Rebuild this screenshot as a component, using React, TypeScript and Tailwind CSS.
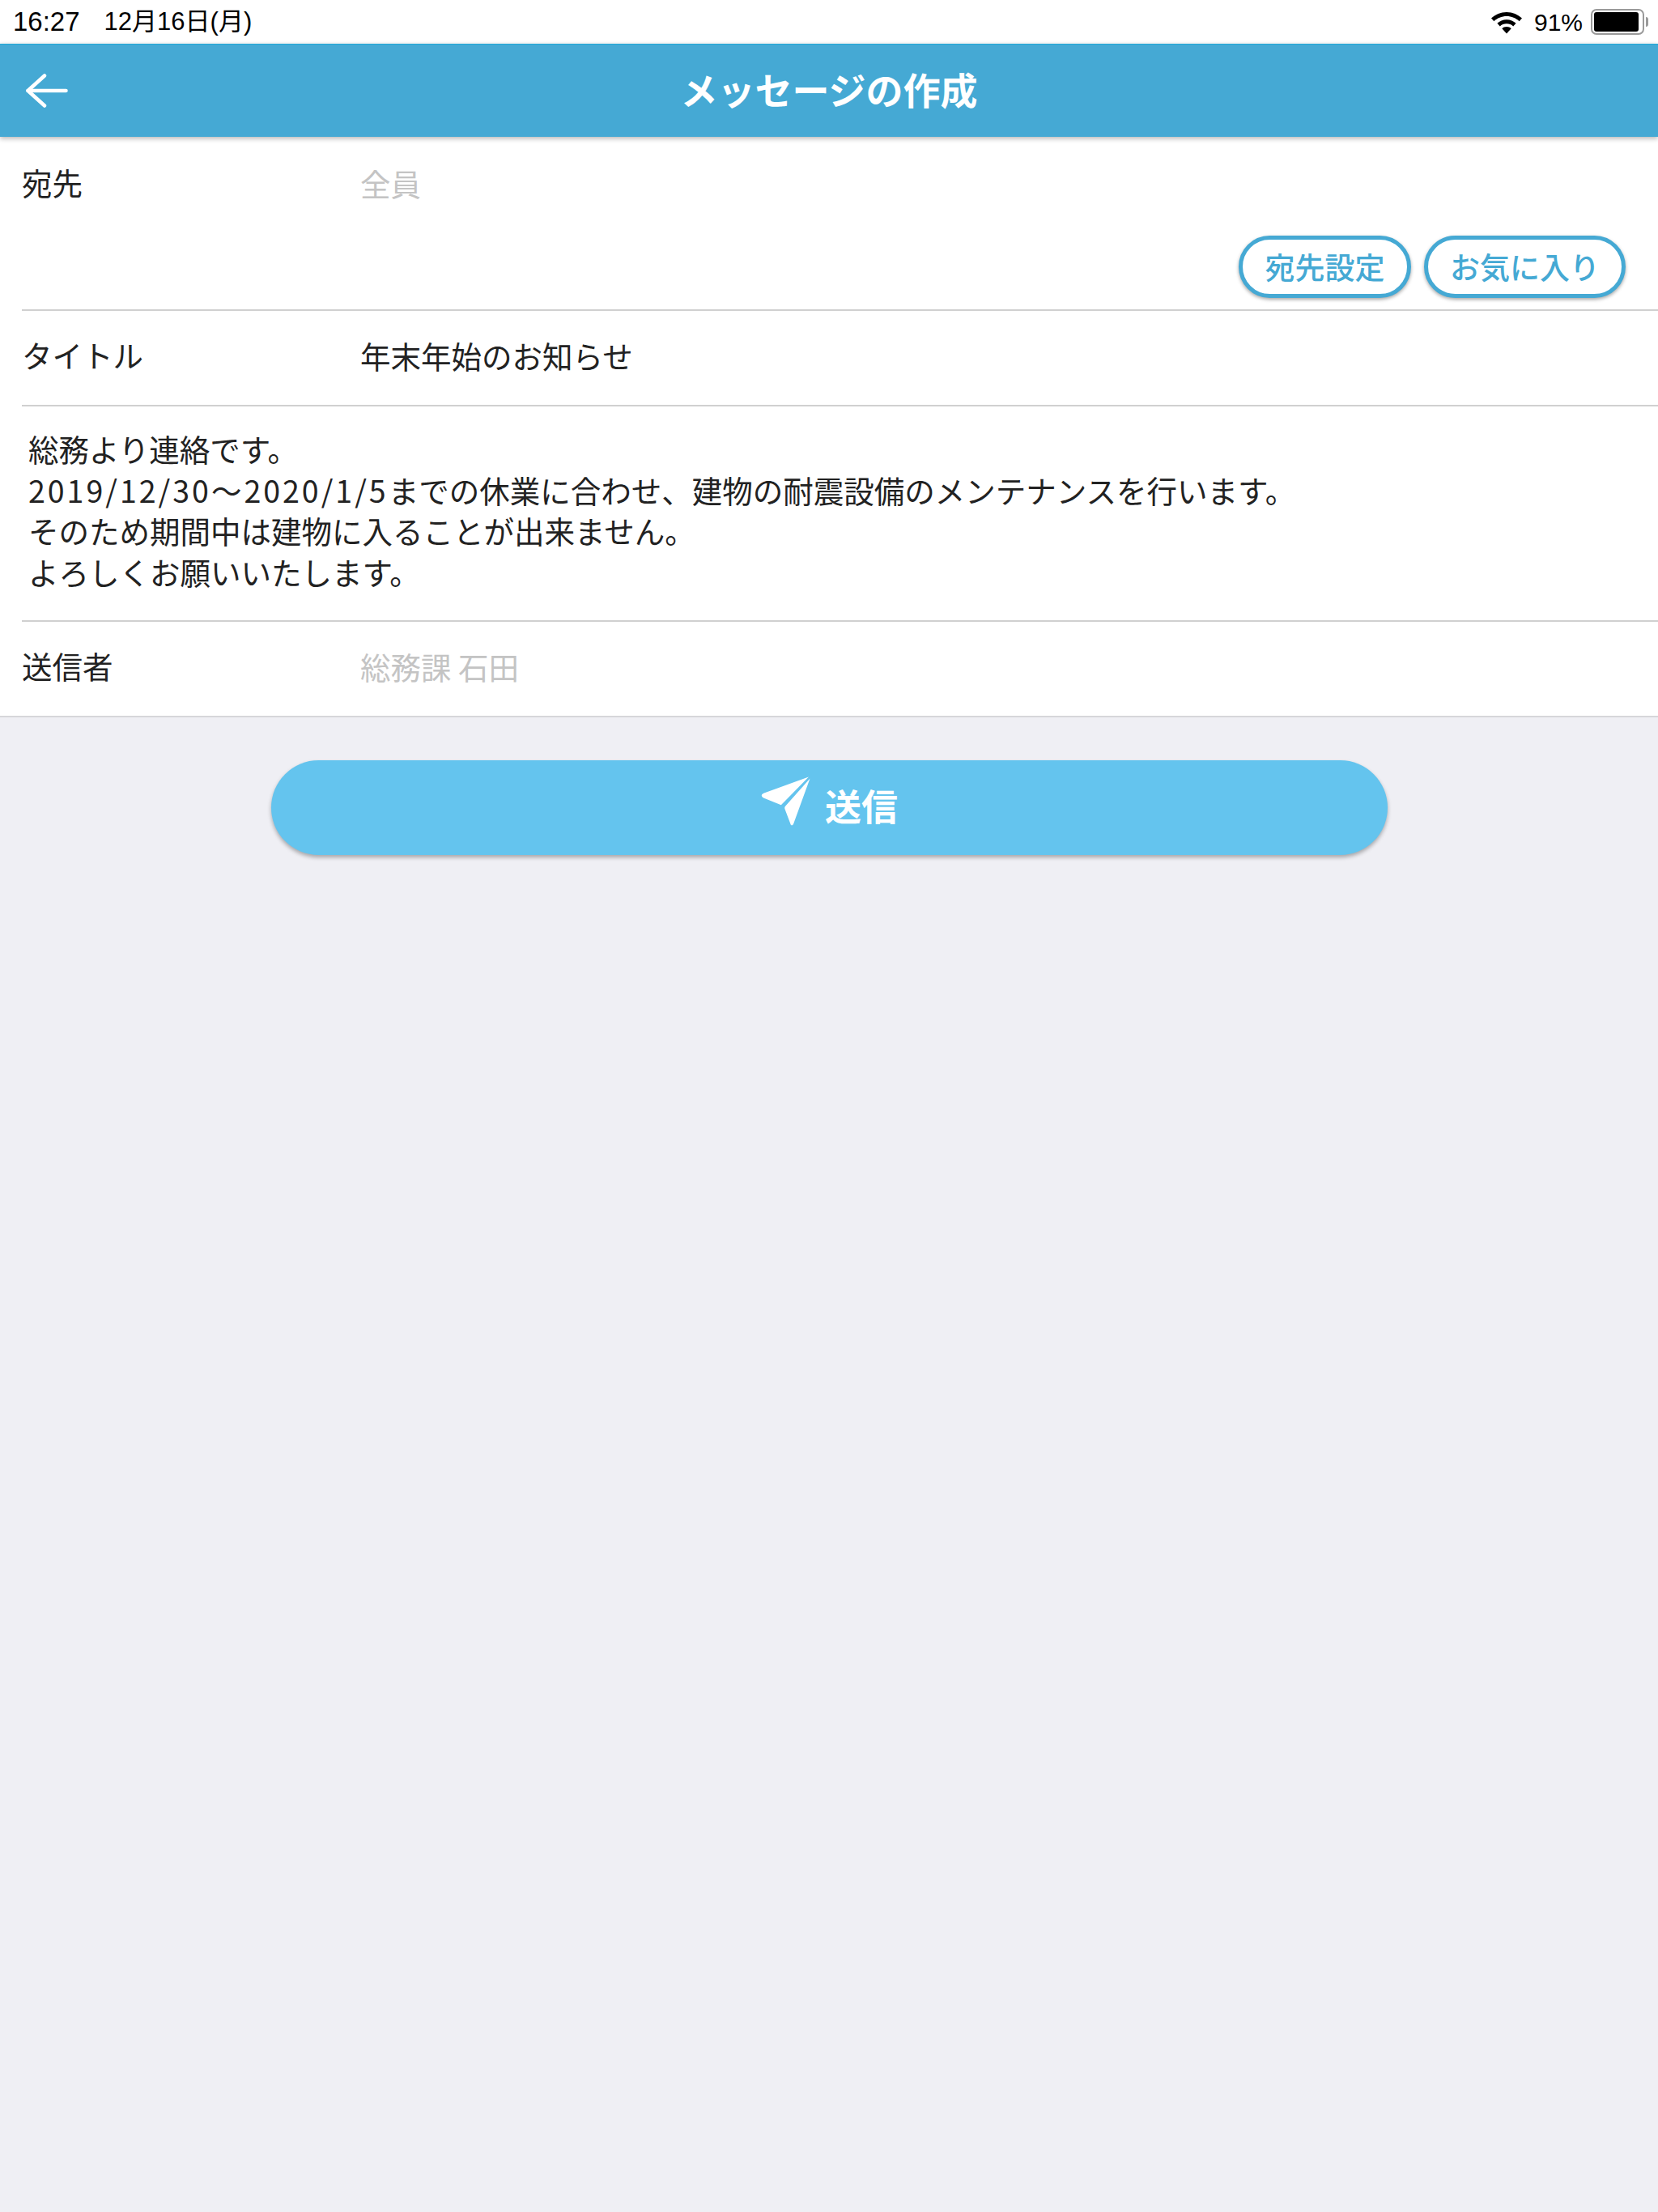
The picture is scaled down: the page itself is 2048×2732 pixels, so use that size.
const jp = "font-['Noto_Sans_CJK_JP',sans-serif]";

function StatusBar() {
  return (
    <div className="flex h-[54px] items-center justify-between bg-white pl-[16px] pr-[12px] text-black font-['Liberation_Sans','Noto_Sans_CJK_JP',sans-serif]">
      <div className="flex items-center gap-[30px] text-[33px]">
        <span>16:27</span>
        <span className="text-[31px]">12月16日(月)</span>
      </div>
      <div className="flex items-center text-[30px]">
        <svg viewBox="0 0 40 32" className="mr-[14px] h-[32px] w-[40px]" fill="black">
          <path d="M20 4C12.6 4 6 6.9 1 11.6l3.4 3.7C8.4 11.5 14 9.1 20 9.1s11.6 2.4 15.6 6.2l3.4-3.7C34 6.9 27.4 4 20 4z" />
          <path d="M20 13.2c-4.5 0-8.6 1.8-11.6 4.6l3.4 3.7c2.1-2 5-3.2 8.2-3.2s6.1 1.2 8.2 3.2l3.4-3.7c-3-2.8-7.1-4.6-11.6-4.6z" />
          <path d="M20 22c-2.2 0-4.2.9-5.7 2.2L20 30.4l5.7-6.2C24.2 22.9 22.2 22 20 22z" />
        </svg>
        <span className="mr-[10px]">91%</span>
        <div className="flex h-[32px] w-[66px] items-center rounded-[7px] border-2 border-[#9a9a9a] p-[2px]">
          <div className="h-full w-[55px] rounded-[3px] bg-black" />
        </div>
        <div className="ml-[2px] h-[12px] w-[3px] rounded-r-full bg-[#9a9a9a]" />
      </div>
    </div>
  );
}

function Header() {
  return (
    <div className="relative z-10 flex h-[115px] items-center justify-center border-t border-[#1fa9d8] bg-[#45a9d4] shadow-[0_2px_6px_rgba(0,0,0,0.3)]">
      <svg viewBox="0 0 53 42" className="absolute left-[31px] top-[36px] h-[42px] w-[53px]" fill="none" stroke="white" strokeWidth={4.5} strokeLinecap="round" strokeLinejoin="round">
        <path d="M50.5 21H3.5" />
        <path d="M24 2.5L3.5 21L24 39.5" />
      </svg>
      <h1 className={`mb-[6px] text-[46px] font-bold text-white ${jp}`}>メッセージの作成</h1>
    </div>
  );
}

function Row({ label, value, muted }: { label: string; value: string; muted?: boolean }) {
  return (
    <div className="flex items-center text-[37.5px] leading-[50px]">
      <span className="-mt-[3px] w-[418px] text-[#222222]">{label}</span>
      <span className={muted ? 'text-[#c4c4c4]' : 'text-[#222222]'}>{value}</span>
    </div>
  );
}

function PillButton({ children, width }: { children: string; width: string }) {
  return (
    <button className={`h-[77px] rounded-full border-[5px] border-[#45a9d4] bg-white text-center text-[37px] font-medium text-[#45a9d4] shadow-[0_2px_4px_rgba(0,0,0,0.35)] ${width}`}>
      {children}
    </button>
  );
}

export default function App() {
  return (
    <div className={`flex min-h-screen flex-col bg-[#efeff4] ${jp}`}>
      <div className="bg-white">
        <StatusBar />
        <Header />
        <div className="border-b-2 border-[#d6d6da]">
          <div className="pl-[27px]">
            <div className="h-[215px] border-b-2 border-[#d0d0d0] pt-[32px]">
              <Row label="宛先" value="全員" muted />
              <div className="mt-[40px] flex justify-end gap-[16px] pr-[40px]">
                <PillButton width="w-[213px]">宛先設定</PillButton>
                <PillButton width="w-[249px]">お気に入り</PillButton>
              </div>
            </div>
            <div className="h-[118px] border-b-2 border-[#d0d0d0] pt-[30px]">
              <Row label="タイトル" value="年末年始のお知らせ" />
            </div>
            <div className="h-[266px] border-b-2 border-[#d0d0d0] pl-[8px] pt-[27px] text-[37.5px] leading-[50.7px] text-[#222222]">
              <p>総務より連絡です。</p>
              <p>
                <span className="tracking-[3px]">2019/12/30～2020/1/5</span>までの休業に合わせ、建物の耐震設備のメンテナンスを行います。
              </p>
              <p>そのため期間中は建物に入ることが出来ません。</p>
              <p>よろしくお願いいたします。</p>
            </div>
            <div className="h-[116px] pt-[30px]">
              <Row label="送信者" value="総務課 石田" muted />
            </div>
          </div>
        </div>
      </div>
      <div className="flex justify-center pt-[53px]">
        <button className="flex h-[117px] w-[1379px] items-center justify-center rounded-full bg-[#64c4ee] text-[45px] font-bold text-white shadow-[0_3px_5px_rgba(0,0,0,0.3)]">
          <svg viewBox="0 0 60 60" className="mb-[18px] mr-[18px] h-[62px] w-[62px]" fill="white">
            <path d="M58 1.5L25 35L4 26.5C1 25 1 22.5 4 21Z" />
            <path d="M59.5 3.5L40 57C39 60 36.5 60 36 57L29.5 40C29 38.5 29.2 37.5 30 36.5Z" />
          </svg>
          <span className="mb-[6px]">送信</span>
        </button>
      </div>
    </div>
  );
}
